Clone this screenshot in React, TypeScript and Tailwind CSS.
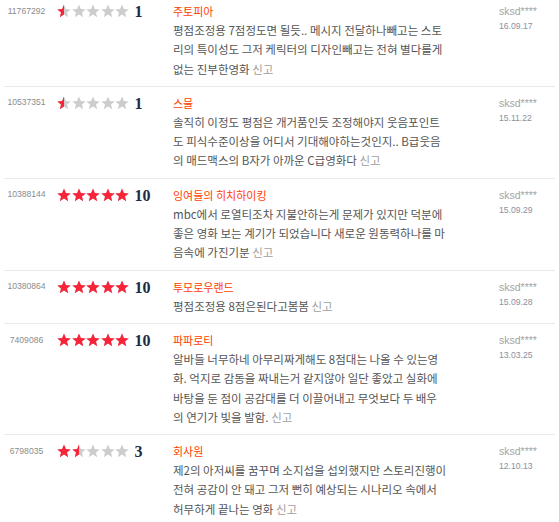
const reviews = [
  {
    id: "11767292",
    score: 1,
    title: "주토피아",
    lines: [
      "평점조정용 7점정도면 될듯.. 메시지 전달하나빼고는 스토",
      "리의 특이성도 그저 케릭터의 디자인빼고는 전혀 별다를게",
      "없는 진부한영화",
    ],
    user: "sksd****",
    date: "16.09.17",
  },
  {
    id: "10537351",
    score: 1,
    title: "스물",
    lines: [
      "솔직히 이정도 평점은 개거품인듯 조정해야지 웃음포인트",
      "도 피식수준이상을 어디서 기대해야하는것인지.. B급웃음",
      "의 매드맥스의 B자가 아까운 C급영화다",
    ],
    user: "sksd****",
    date: "15.11.22",
  },
  {
    id: "10388144",
    score: 10,
    title: "잉여들의 히치하이킹",
    lines: [
      "mbc에서 로열티조차 지불안하는게 문제가 있지만 덕분에",
      "좋은 영화 보는 계기가 되었습니다 새로운 원동력하나를 마",
      "음속에 가진기분",
    ],
    user: "sksd****",
    date: "15.09.29",
  },
  {
    id: "10380864",
    score: 10,
    title: "투모로우랜드",
    lines: ["평점조정용 8점은된다고봄봄"],
    user: "sksd****",
    date: "15.09.28",
  },
  {
    id: "7409086",
    score: 10,
    title: "파파로티",
    lines: [
      "알바들 너무하네 아무리짜게해도 8점대는 나올 수 있는영",
      "화. 억지로 감동을 짜내는거 같지않아 일단 좋았고 실화에",
      "바탕을 둔 점이 공감대를 더 이끌어내고 무엇보다 두 배우",
      "의 연기가 빛을 발함.",
    ],
    user: "sksd****",
    date: "13.03.25",
  },
  {
    id: "6798035",
    score: 3,
    title: "회사원",
    lines: [
      "제2의 아저씨를 꿈꾸며 소지섭을 섭외했지만 스토리진행이",
      "전혀 공감이 안 돼고 그저 뻔히 예상되는 시나리오 속에서",
      "허무하게 끝나는 영화",
    ],
    user: "sksd****",
    date: "12.10.13",
  },
];

const STAR = "7,0.6 8.9,5.1 13.7,5.4 10,8.5 11.2,13.2 7,10.6 2.8,13.2 4,8.5 0.3,5.4 5.1,5.1";

function Star({ fill }: { fill: number }) {
  return (
    <span className="relative block w-[14px] h-[14px]">
      <svg viewBox="0 0 14 14" className="absolute inset-0 w-[14px] h-[14px]">
        <polygon points={STAR} fill="#cdcdcd" />
      </svg>
      {fill > 0 && (
        <span className="absolute left-0 top-0 h-[14px] overflow-hidden" style={{ width: `${fill * 14}px` }}>
          <svg viewBox="0 0 14 14" className="w-[14px] h-[14px]">
            <polygon points={STAR} fill="#f7243a" />
          </svg>
        </span>
      )}
    </span>
  );
}

function Stars({ score }: { score: number }) {
  const value = score / 2;
  return (
    <div className="flex gap-[0.6px] items-center">
      {[0, 1, 2, 3, 4].map((i) => (
        <Star key={i} fill={Math.max(0, Math.min(1, value - i))} />
      ))}
    </div>
  );
}

export default function App() {
  return (
    <div className="w-[559px] h-[522px] bg-white overflow-hidden px-[4px] font-['Noto_Sans_CJK_KR',sans-serif]">
      {reviews.map((r, index) => (
        <div
          key={r.id}
          className={`flex items-start border-b border-[#e9e9e9] pb-[7px] ${index === 0 ? "pt-[1px]" : "pt-[6px]"}`}
        >
          {/* id + rating */}
          <div className="w-[169px] flex items-center h-[20px] shrink-0">
            <span className="w-[45px] text-center text-[8.6px] text-[#8c8c8c] font-['Liberation_Sans',sans-serif]">
              {r.id}
            </span>
            <span className="ml-[8px]">
              <Stars score={r.score} />
            </span>
            <span className="ml-[5px] text-[16px] font-bold text-[#1e2a44] font-['Liberation_Serif',serif] leading-none mt-[2px]">
              {r.score}
            </span>
          </div>

          {/* title + body */}
          <div className="w-[326px] shrink-0">
            <div className="text-[11px] leading-[20px] text-[#ff4000]">{r.title}</div>
            {r.lines.map((line, i) => (
              <div key={i} className="text-[11.5px] leading-[19.3px] text-[#555] whitespace-nowrap">
                {line}
                {i === r.lines.length - 1 && <span className="text-[#a0a0a0]"> 신고</span>}
              </div>
            ))}
          </div>

          {/* user */}
          <div className="pt-[3px] font-['Liberation_Sans',sans-serif]">
            <div className="text-[10.5px] leading-[15px] text-[#a3a3a3]">{r.user}</div>
            <div className="text-[8.6px] leading-[15px] text-[#8e8e9c]">{r.date}</div>
          </div>
        </div>
      ))}
    </div>
  );
}
